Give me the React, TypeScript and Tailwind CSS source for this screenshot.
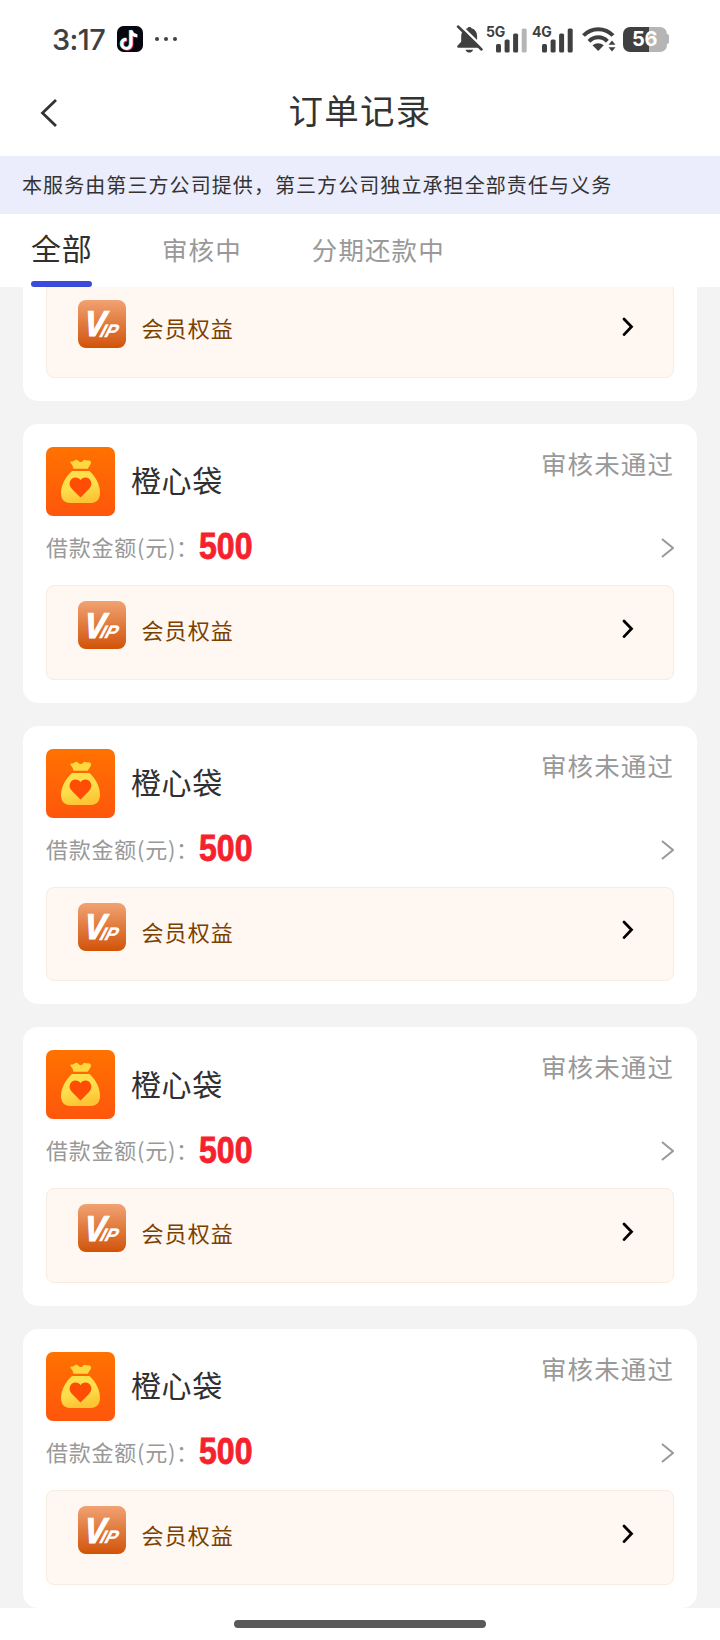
const TABS = [
    { id: "all", label: "全部" },
    { id: "review", label: "审核中" },
    { id: "repaying", label: "分期还款中" },
];

const ORDERS = [
    { id: 1, name: "橙心袋", status: "审核未通过", amount: 500 },
    { id: 2, name: "橙心袋", status: "审核未通过", amount: 500 },
    { id: 3, name: "橙心袋", status: "审核未通过", amount: 500 },
    { id: 4, name: "橙心袋", status: "审核未通过", amount: 500 },
];

type Order = (typeof ORDERS)[number];

function Signal({ label, weak }: { label: string; weak?: boolean }) {
    return (
        <div className="relative h-[27px] w-[41px]">
            <span className="absolute -top-px left-0 font-[Inter] text-[14px] leading-[14px] font-bold tracking-[-0.3px]">{label}</span>
            <svg width="41" height="27" viewBox="0 0 41 27" fill="currentColor">
                <rect x="10" y="18" width="5" height="8.5" rx="1.5" />
                <rect x="18.6" y="13.5" width="5" height="13" rx="1.5" />
                <rect x="27.1" y="7.5" width="5" height="19" rx="1.5" />
                <rect x="35.7" y="2.5" width="5" height="24" rx="1.5" fill={weak ? "#b5b5b5" : "currentColor"} />
            </svg>
        </div>
    );
}

function StatusBar() {
    return (
        <div className="flex h-[66px] items-center justify-between pt-3 pr-[51px] pl-[52px] text-[#404040]">
            <div className="flex items-center">
                <span className="w-[65px] font-[Inter] text-[29px] leading-none font-medium tracking-[-0.6px]">3:17</span>
                {/* music app notification */}
                <svg width="26" height="26" viewBox="0 0 26 26">
                    <rect width="26" height="26" rx="6.5" fill="#07060f" />
                    <g fill="none" strokeWidth="3">
                        <path d="M13.3 4v13.6a4.6 4.6 0 1 1-4.6-4.6M13.3 4c.4 3 2.5 5 6 5.3" stroke="#5ee6e6" />
                        <path d="M14.9 5v13.6a4.6 4.6 0 1 1-4.6-4.6M14.9 5c.4 3 2.5 5 6 5.3" stroke="#f0315a" />
                        <path d="M14.1 4.5v13.4a4.6 4.6 0 1 1-4.6-4.6M14.1 4.5c.4 3 2.5 5 6 5.3" stroke="#fff" />
                    </g>
                </svg>
                <div className="ml-3 flex gap-[5px]">
                    <i className="size-[4px] rounded-full bg-[#404040]" />
                    <i className="size-[4px] rounded-full bg-[#404040]" />
                    <i className="size-[4px] rounded-full bg-[#404040]" />
                </div>
            </div>

            <div className="flex items-center">
                <svg width="27" height="29" viewBox="0 0 27 29" className="mr-[3.5px]">
                    <path
                        d="M13.5 2c-.9 0-1.7.5-2 1.3C7.6 4.2 5.2 7.5 5.2 11.5v5.2L1.6 20.5c-.8 1-.4 2.3.9 2.3h20.9c1.3 0 1.7-1.3.9-2.3l-3.2-3.8v-5.2c0-4-2-7.3-5.6-8.2-.3-.8-1.1-1.3-2-1.3zM9.5 24.7h7.6c-.6 1.7-2 2.9-3.8 2.9s-3.2-1.2-3.8-2.9z"
                        fill="currentColor"
                    />
                    <path d="M3.2-.8 27 22.6" stroke="#fff" strokeWidth="2.5" />
                    <path d="M2 1.5 25.5 24.5" stroke="currentColor" strokeWidth="2.5" strokeLinecap="round" />
                </svg>
                <Signal label="5G" weak />
                <div className="w-[5px]" />
                <Signal label="4G" />
                <svg width="34" height="26" viewBox="0 0 34 26" className="ml-[8.5px]">
                    <g fill="none" stroke="currentColor" strokeWidth="4">
                        <path d="M1.5 9.5C9.5 1 23 1 31 9.5" />
                        <path d="M7 15.3c5.2-5.3 13.3-5.3 18.5 0" />
                    </g>
                    <path d="M10.5 19.3c3.3-2.8 8-2.8 11.3 0L16.2 25z" fill="currentColor" />
                    <circle cx="30" cy="20" r="6.5" fill="#fff" />
                    <path d="m30 14.5 3.5 4.3h-7zM30 25.5l3.5-4.3h-7z" fill="currentColor" />
                </svg>
                <div className="ml-[7px] flex items-center">
                    <div className="flex h-[25px] w-[44px] items-center justify-center rounded-[7px] bg-linear-to-r from-[#404040] from-60% to-[#b5b5b5] to-60% font-[Inter] text-[20px] leading-none font-bold tracking-[-0.5px] text-white">
                        56
                    </div>
                    <div className="h-[10px] w-[2.5px] rounded-r-full bg-[#b5b5b5]" />
                </div>
            </div>
        </div>
    );
}

function BagIcon() {
    return (
        <svg width="69" height="69" viewBox="0 0 69 69">
            <defs>
                <linearGradient id="bagBg" x1="0" y1="0" x2="0" y2="1">
                    <stop stopColor="#ff7200" />
                    <stop offset="1" stopColor="#fe560c" />
                </linearGradient>
                <linearGradient id="bagBody" x1="0" y1="0" x2="0.3" y2="1">
                    <stop stopColor="#ffe14d" />
                    <stop offset="0.6" stopColor="#fddd4a" />
                    <stop offset="1" stopColor="#fdc535" />
                </linearGradient>
            </defs>
            <rect width="69" height="69" rx="7" fill="url(#bagBg)" />
            <path
                d="M24.5 14.5c2 .4 3.5-.5 5-1.5.8-.5 1.6-.4 2.3.3 1.8 2.3 3.7 2.3 5.5.1.8-.9 1.7-.8 2.6-.1l4 .2c1.300 1.500 1.600 2 .5 4l-2.700 4.200H27.500l-1-3.200c-.8-1-2.600-2.800-2-4z"
                fill="#ffd840"
            />
            <path
                d="M26 24h17.500c5.500 4.500 10.500 13.500 10.500 22 0 6.500-4 10-9 10H24c-5.500 0-9-3.500-9-10 0-8.500 5.500-17.500 11-22z"
                fill="url(#bagBody)"
            />
            <path d="M34.5 50.5 26 42c-5-5-1.5-11.5 3.5-11.5 2.2 0 4 1.1 5 2.7 1-1.6 2.8-2.7 5-2.7 5 0 8.500 6.500 3.500 11.500z" fill="#ff4d05" />
        </svg>
    );
}

function VipIcon() {
    return (
        <div className="relative size-12 overflow-hidden rounded-[8px] bg-linear-to-b from-[#f1a272] via-[#e07a3c] to-[#d25300] font-['Liberation_Sans'] leading-none font-bold text-white italic">
            <span className="absolute top-[6.5px] left-[4.5px] origin-bottom-left -skew-x-6 scale-x-[0.88] text-[36px] [-webkit-text-stroke:1.2px_white]">V</span>
            <span className="absolute top-[22px] left-[22.5px] -skew-x-[18deg] text-[18px] [-webkit-text-stroke:0.3px_white]">IP</span>
        </div>
    );
}

function Benefits() {
    return (
        <div className="flex h-[94.67px] shrink-0 items-start rounded-[8px] border border-[#f8ebdf] bg-[#fef7f2] pt-[15.2px] pr-[39px] pl-[31px]">
            <VipIcon />
            <span className="mt-[15.8px] ml-[15.5px] text-[22px] leading-[24px] tracking-[1.1px] text-[#7b3f00]">会员权益</span>
            <svg width="12" height="20" viewBox="0 0 12 20" fill="none" stroke="#000" strokeWidth="2.8" strokeLinecap="round" className="mt-[17.5px] ml-auto">
                <path d="m2 2 7.5 7.8L2 17.6" />
            </svg>
        </div>
    );
}

function OrderCard({ order }: { order: Order }) {
    return (
        <section className="flex h-[278.67px] shrink-0 flex-col rounded-[15px] bg-white p-[23px]">
            <div className="flex h-[69px] justify-between">
                <div className="flex items-center gap-4">
                    <BagIcon />
                    <h2 className="pb-[4.5px] text-[30px] leading-none tracking-[0.6px] text-[#303030]">{order.name}</h2>
                </div>
                <span className="mt-[3px] text-[25.5px] leading-[26px] tracking-[1.1px] text-[#999]">{order.status}</span>
            </div>

            <div className="flex h-[69px] items-center justify-between pb-[5px]">
                <div className="flex h-[26px] items-center text-[22px] leading-none tracking-[0.75px] text-[#999]">
                    <span className="w-[153px] pb-[4px] whitespace-nowrap">借款金额(元)：</span>
                    <span className="origin-left scale-x-[0.89] pb-px font-['Liberation_Sans'] text-[36px] font-bold tracking-normal text-[#f5222d] [-webkit-text-stroke:0.8px_#f5222d]">
                        {order.amount}
                    </span>
                </div>
                <svg width="14" height="22" viewBox="0 0 14 22" fill="none" stroke="#999" strokeWidth="2">
                    <path d="m2 2 11 9-11 9" />
                </svg>
            </div>

            <Benefits />
        </section>
    );
}

export default function App() {
    return (
        <main className="flex h-[1640px] w-[720px] flex-col overflow-hidden bg-[#f3f3f3] font-['Noto_Sans_CJK_SC',sans-serif]">
            <header className="bg-white">
                <StatusBar />
                <div className="grid h-[90px] grid-cols-3 items-center px-10">
                    <svg width="18" height="30" viewBox="0 0 18 30" fill="none" stroke="#333" strokeWidth="2.8" className="mt-[3px]">
                        <path d="M16 2 2.5 15 16 28" />
                    </svg>
                    <h1 className="pb-[4px] text-center text-[34.5px] leading-none tracking-[1.3px] text-[#333]">订单记录</h1>
                </div>
            </header>

            <p className="flex h-[58px] items-center bg-[#ebedfc] px-[22px] pb-px text-[20px] leading-none tracking-[1.08px] whitespace-nowrap text-[#333]">
                本服务由第三方公司提供，第三方公司独立承担全部责任与义务
            </p>

            <nav className="flex h-[73px] items-stretch gap-[70px] bg-white pl-[31px] text-[25.5px] leading-none tracking-[1.1px] text-[#999]">
                {TABS.map((tab, i) =>
                    i === 0 ? (
                        <button key={tab.id} className="flex w-[61px] flex-col justify-between pt-[18px] text-[30px] tracking-[0.8px] whitespace-nowrap text-[#303030]">
                            {tab.label}
                            <span className="h-[6px] w-full rounded-full bg-[#3a4bdc]" />
                        </button>
                    ) : (
                        <button key={tab.id} className="pb-[3px] whitespace-nowrap">
                            {tab.label}
                        </button>
                    )
                )}
            </nav>

            <div className="flex min-h-0 flex-1 flex-col justify-end gap-[23px] overflow-hidden px-[23px] pb-[0.4px]">
                {/* tail of the order that is scrolled under the tabs */}
                <section className="flex h-[114px] shrink-0 flex-col justify-end overflow-hidden rounded-b-[15px] bg-white px-[23px] pb-[23px]">
                    <Benefits />
                </section>
                {ORDERS.map((order) => (
                    <OrderCard key={order.id} order={order} />
                ))}
            </div>

            <footer className="flex h-8 shrink-0 justify-center bg-white pt-3">
                <div className="h-2 w-[252px] rounded-full bg-[#5a5a5a]" />
            </footer>
        </main>
    );
}
